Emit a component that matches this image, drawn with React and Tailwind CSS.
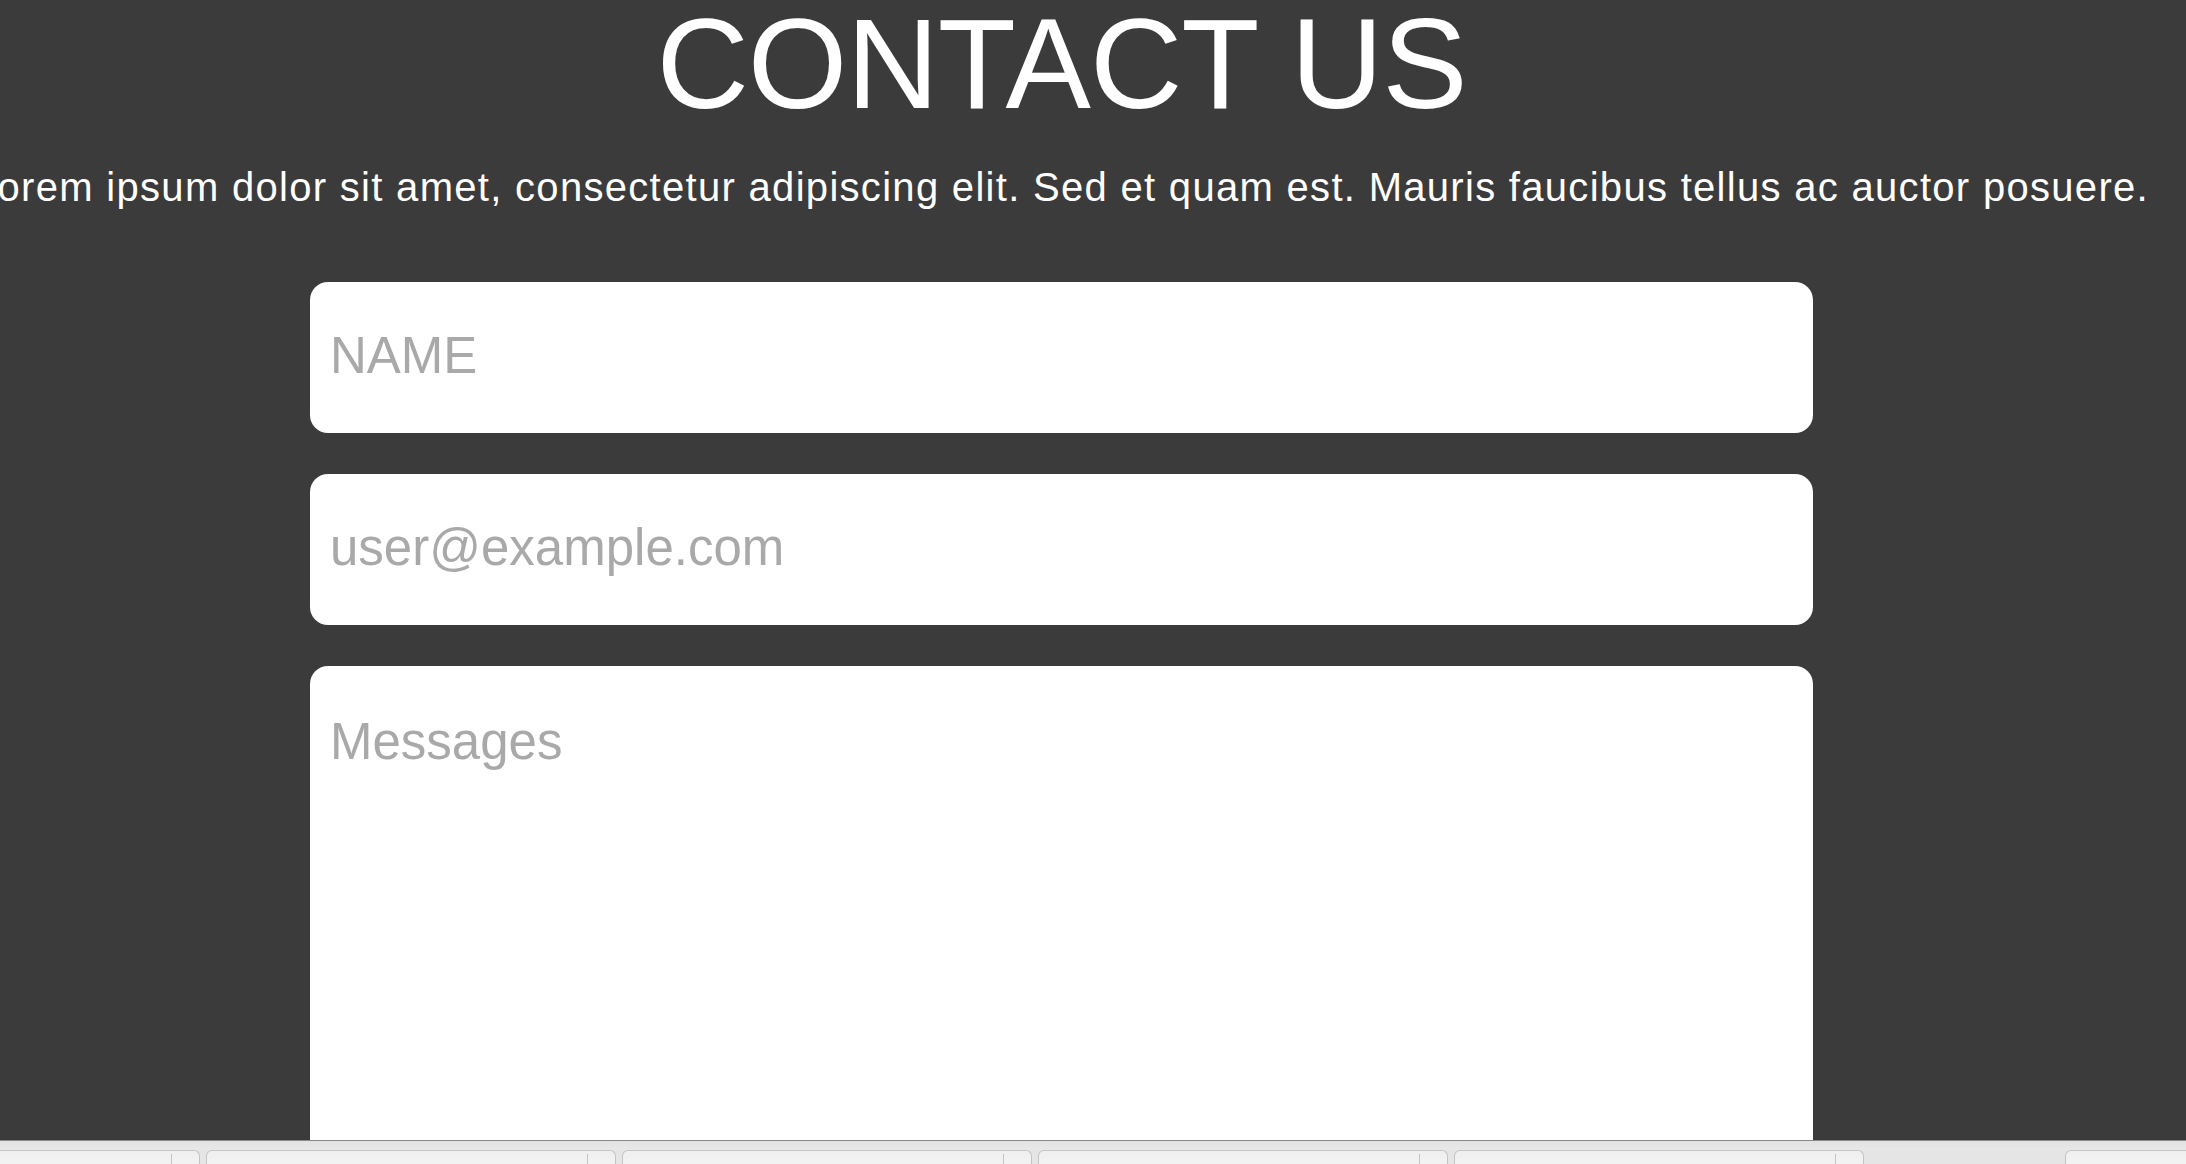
export default function App() {
  const tabs = [0, 1, 2, 3, 4];
  return (
    <div className="h-[1164px] w-[2186px] flex flex-col overflow-hidden bg-[#3b3b3b]" style={{ fontFamily: '"Liberation Sans", Arial, sans-serif' }}>
      <div className="h-[1140px] overflow-hidden shrink-0">
        <div className="w-[2123px] flex flex-col items-center">
          <h1 className="text-[128px] leading-none font-normal text-white tracking-[-1px] text-center">CONTACT US</h1>
          <div className="mt-[36px] h-[46px] w-full flex justify-center">
            <p className="whitespace-nowrap text-[40px] leading-[46px] text-white tracking-[1.3px] shrink-0">
              Lorem ipsum dolor sit amet, consectetur adipiscing elit. Sed et quam est. Mauris faucibus tellus ac auctor posuere.
            </p>
          </div>
          <form className="mt-[72px] flex flex-col items-center gap-[41px]">
            <input
              type="text"
              placeholder="NAME"
              className="w-[1503px] h-[151px] rounded-[18px] bg-white px-[20px] pb-[4px] text-[51px] text-gray-800 placeholder:text-[#a9a9a9] outline-none"
              style={{ fontFamily: '"Liberation Sans", Arial, sans-serif' }}
            />
            <input
              type="email"
              placeholder="user@example.com"
              className="w-[1503px] h-[151px] rounded-[18px] bg-white px-[20px] pb-[4px] text-[51px] text-gray-800 placeholder:text-[#a9a9a9] outline-none"
              style={{ fontFamily: '"Liberation Sans", Arial, sans-serif' }}
            />
            <textarea
              placeholder="Messages"
              className="w-[1503px] h-[600px] rounded-[18px] bg-white px-[20px] pt-[38px] text-[51px] text-gray-800 placeholder:text-[#a9a9a9] outline-none resize-none block"
              style={{ fontFamily: '"Liberation Sans", Arial, sans-serif' }}
            />
          </form>
        </div>
      </div>
      <div className="h-[24px] shrink-0 border-t border-[#8a8a8a] bg-[#e5e5e5] flex flex-col">
        <div className="h-[9px] shrink-0 bg-[linear-gradient(to_bottom,#e2e2e2,#e8e8e8)]" />
        <div className="flex-1 flex items-stretch gap-[6px] overflow-hidden">
          {tabs.map((i) => (
            <div
              key={i}
              className={`${i === 0 ? "-ml-[210px]" : ""} relative shrink-0 w-[410px] rounded-t-[6px] border border-b-0 border-[#c4c4c4] bg-[linear-gradient(to_bottom,#efefef,#f3f3f3)]`}
            >
              <div className="absolute right-[27px] top-[3px] bottom-0 w-px bg-[#c6c6c6]" />
            </div>
          ))}
          <div className="ml-[195px] shrink-0 w-[410px] rounded-t-[6px] border border-b-0 border-[#c4c4c4] bg-[linear-gradient(to_bottom,#efefef,#f3f3f3)]" />
        </div>
      </div>
    </div>
  );
}
